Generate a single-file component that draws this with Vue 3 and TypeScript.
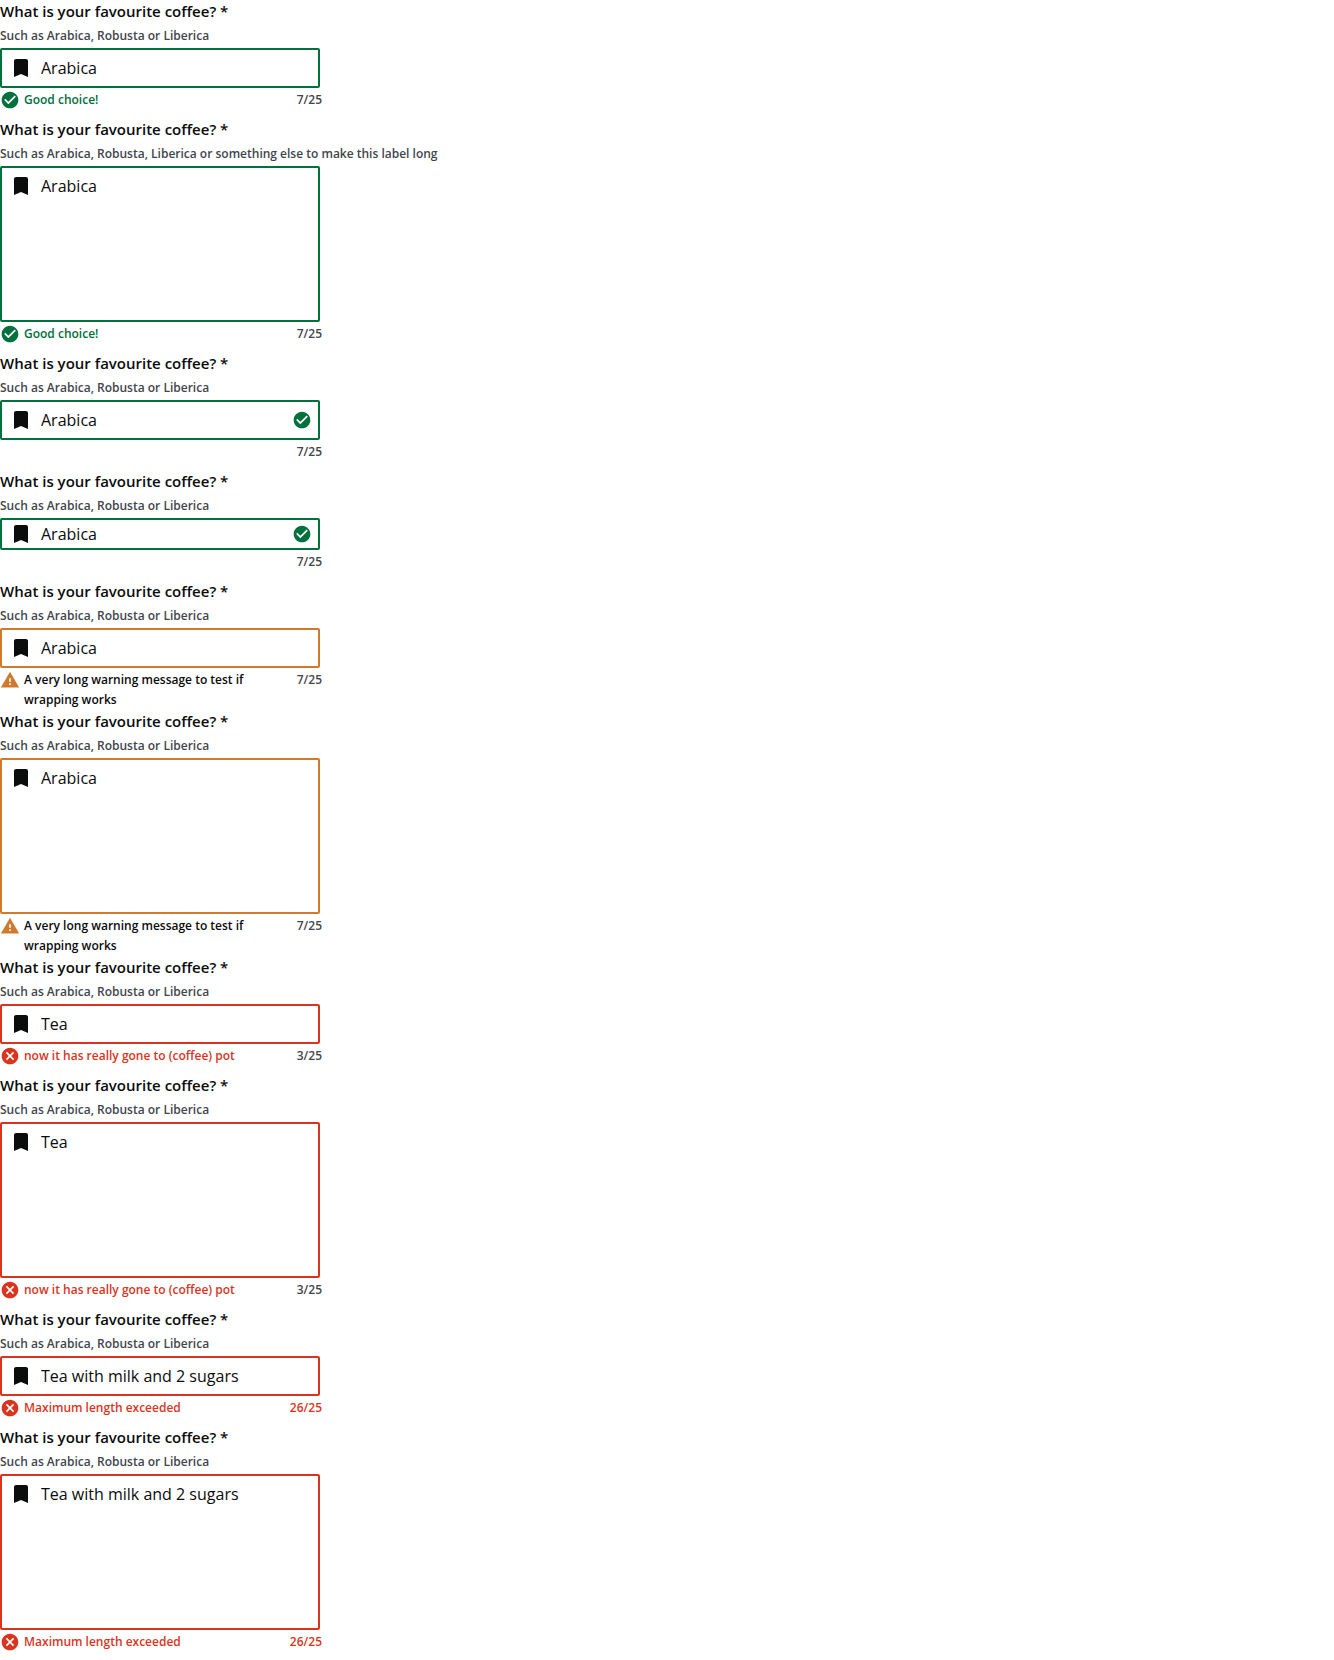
<script setup lang="ts">
type Status = 'success' | 'warning' | 'error'

interface Field {
  value: string
  status: Status
  message?: string
  helper?: string
  multiline?: boolean
  small?: boolean
}

const max = 25
const defaultHelper = 'Such as Arabica, Robusta or Liberica'
const longWarning = 'A very long warning message to test if wrapping works'

const fields: Field[] = [
  { value: 'Arabica', status: 'success', message: 'Good choice!' },
  {
    value: 'Arabica',
    status: 'success',
    message: 'Good choice!',
    multiline: true,
    helper: 'Such as Arabica, Robusta, Liberica or something else to make this label long',
  },
  { value: 'Arabica', status: 'success' },
  { value: 'Arabica', status: 'success', small: true },
  { value: 'Arabica', status: 'warning', message: longWarning },
  { value: 'Arabica', status: 'warning', message: longWarning, multiline: true },
  { value: 'Tea', status: 'error', message: 'now it has really gone to (coffee) pot' },
  { value: 'Tea', status: 'error', message: 'now it has really gone to (coffee) pot', multiline: true },
  { value: 'Tea with milk and 2 sugars', status: 'error', message: 'Maximum length exceeded' },
  { value: 'Tea with milk and 2 sugars', status: 'error', message: 'Maximum length exceeded', multiline: true },
]

const iconPaths: Record<Status, string> = {
  success:
    'M12 2C6.48 2 2 6.48 2 12s4.48 10 10 10 10-4.48 10-10S17.52 2 12 2zm-2 15l-5-5 1.41-1.41L10 14.17l7.59-7.59L19 8l-9 9z',
  warning: 'M1 21h22L12 2 1 21zm12-3h-2v-2h2v2zm0-4h-2v-4h2v4z',
  error:
    'M12 2C6.47 2 2 6.47 2 12s4.47 10 10 10 10-4.47 10-10S17.53 2 12 2zm5 13.59L15.59 17 12 13.41 8.41 17 7 15.59 10.59 12 7 8.41 8.41 7 12 10.59 15.59 7 17 8.41 13.41 12 17 15.59z',
}
</script>

<template>
  <main>
    <div v-for="(field, i) in fields" :key="i" class="field" :class="field.status">
      <label class="label" :for="`coffee-${i}`">What is your favourite coffee? *</label>
      <p :id="`helper-${i}`" class="helper">{{ field.helper ?? defaultHelper }}</p>
      <div class="box" :class="{ small: field.small, multiline: field.multiline }">
        <svg class="bookmark" viewBox="0 0 24 24" aria-hidden="true">
          <path d="M17 3H7c-1.1 0-2 .9-2 2v16l7-3 7 3V5c0-1.1-.9-2-2-2z" />
        </svg>
        <textarea
          v-if="field.multiline"
          :id="`coffee-${i}`"
          v-model="field.value"
          class="control"
          :aria-describedby="`helper-${i}`"
          required
        ></textarea>
        <input
          v-else
          :id="`coffee-${i}`"
          v-model="field.value"
          class="control"
          type="text"
          :aria-describedby="`helper-${i}`"
          required
        />
        <svg v-if="!field.message" class="status-icon" viewBox="0 0 24 24" aria-hidden="true">
          <path :d="iconPaths[field.status]" />
        </svg>
      </div>
      <div class="footer">
        <template v-if="field.message">
          <svg class="status-icon" viewBox="0 0 24 24" aria-hidden="true">
            <path :d="iconPaths[field.status]" />
          </svg>
          <span class="message">{{ field.message }}</span>
        </template>
        <span class="count" :class="{ over: field.value.length > max }">{{ field.value.length }}/{{ max }}</span>
      </div>
    </div>
  </main>
</template>

<style>
body {
  margin: 0;
  background: #fff;
}
</style>

<style scoped>
.field {
  color: #0b0c0c;
  font-family: "Open Sans", "Noto Sans", sans-serif;
}
.success {
  --status: #00703c;
  --message: #00703c;
}
.warning {
  --status: #d07a30;
  --message: #0b0c0c;
}
.error {
  --status: #d9351e;
  --message: #d9351e;
}
.label {
  display: block;
  padding-bottom: 2px;
  font-size: 15px;
  font-weight: 600;
  line-height: 22px;
}
.helper {
  margin: 0;
  color: #41464d;
  font-size: 12px;
  font-weight: 600;
  line-height: 24px;
}
.box {
  box-sizing: border-box;
  display: flex;
  align-items: center;
  gap: 8px;
  width: 100%;
  max-width: 320px;
  height: 40px;
  padding: 0 6px 0 7px;
  border: 2px solid var(--status);
  border-radius: 2px;
  background: #fff;
}
.box.small {
  height: 32px;
}
.box.multiline {
  align-items: flex-start;
  height: auto;
  padding-top: 6px;
  padding-bottom: 2px;
}
.bookmark {
  flex: none;
  width: 24px;
  height: 24px;
  fill: #0b0c0c;
}
.control {
  flex: 1;
  min-width: 0;
  height: 24px;
  margin: 0;
  padding: 0;
  border: 0;
  outline: 0;
  background: transparent;
  color: inherit;
  font: 400 16px/24px "Open Sans", "Noto Sans", sans-serif;
}
.multiline .control {
  height: 144px;
  resize: none;
}
.status-icon {
  flex: none;
  width: 20px;
  height: 20px;
  fill: var(--status);
}
.footer {
  display: flex;
  gap: 4px;
  width: 100%;
  max-width: 322px;
  min-height: 28px;
  padding-top: 2px;
  box-sizing: border-box;
  font-size: 12px;
  font-weight: 600;
  line-height: 20px;
}
.field:not(:last-child) .footer,
.footer {
  min-height: 30px;
}
.message {
  flex: 1;
  color: var(--message);
}
.count {
  margin-left: auto;
  color: #41464d;
  white-space: nowrap;
}
.count.over {
  color: var(--status);
}
</style>
